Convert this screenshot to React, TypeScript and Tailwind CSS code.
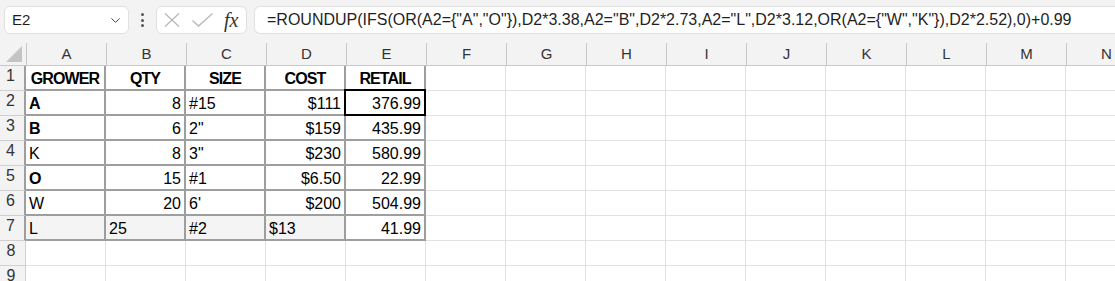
import React from "react";
import { ChevronDown } from "lucide-react";

type Cell = { v: string; align?: "l" | "r" | "c"; bold?: boolean };

const COLS = ["A", "B", "C", "D", "E", "F", "G", "H", "I", "J", "K", "L", "M", "N"];

const DATA: Cell[][] = [
  [
    { v: "GROWER", align: "c", bold: true },
    { v: "QTY", align: "c", bold: true },
    { v: "SIZE", align: "c", bold: true },
    { v: "COST", align: "c", bold: true },
    { v: "RETAIL", align: "c", bold: true },
  ],
  [
    { v: "A", bold: true },
    { v: "8", align: "r" },
    { v: "#15" },
    { v: "$111", align: "r" },
    { v: "376.99", align: "r" },
  ],
  [
    { v: "B", bold: true },
    { v: "6", align: "r" },
    { v: '2"' },
    { v: "$159", align: "r" },
    { v: "435.99", align: "r" },
  ],
  [
    { v: "K" },
    { v: "8", align: "r" },
    { v: '3"' },
    { v: "$230", align: "r" },
    { v: "580.99", align: "r" },
  ],
  [
    { v: "O", bold: true },
    { v: "15", align: "r" },
    { v: "#1" },
    { v: "$6.50", align: "r" },
    { v: "22.99", align: "r" },
  ],
  [
    { v: "W" },
    { v: "20", align: "r" },
    { v: "6'" },
    { v: "$200", align: "r" },
    { v: "504.99", align: "r" },
  ],
  [
    { v: "L" },
    { v: "25" },
    { v: "#2" },
    { v: "$13" },
    { v: "41.99", align: "r" },
  ],
];

const FORMULA =
  '=ROUNDUP(IFS(OR(A2={"A","O"}),D2*3.38,A2="B",D2*2.73,A2="L",D2*3.12,OR(A2={"W","K"}),D2*2.52),0)+0.99';

const FormulaBar = () => (
  <div className="flex h-[43px] items-start bg-[#f3f3f3] pt-[6px] pl-[4px]">
    <div className="flex h-[28px] w-[125px] items-center justify-between rounded-[6px] border border-[#e0e0e0] bg-white pl-[7px] pr-[5px] text-[15px] text-[#1f1f1f]">
      <span>E2</span>
      <ChevronDown size={15} strokeWidth={1.6} className="text-[#444]" />
    </div>
    <div className="flex h-[28px] w-[27px] flex-col items-center justify-center gap-[2.5px]">
      <span className="h-[3px] w-[3px] rounded-full bg-[#555]" />
      <span className="h-[3px] w-[3px] rounded-full bg-[#555]" />
      <span className="h-[3px] w-[3px] rounded-full bg-[#555]" />
    </div>
    <div className="flex h-[28px] w-[91px] items-center rounded-[6px] border border-[#e0e0e0] bg-white pl-[6px]">
      <svg width="16" height="14" viewBox="0 0 16 14" className="ml-[1px]">
        <path d="M1 0.5 L15 13.5 M15 0.5 L1 13.5" stroke="#b8b8b8" strokeWidth="1.3" fill="none" />
      </svg>
      <svg width="21" height="14" viewBox="0 0 21 14" className="ml-[12px]">
        <path d="M0.5 7.5 L6.5 13 L20.5 0.5" stroke="#b8b8b8" strokeWidth="1.3" fill="none" />
      </svg>
      <span className="ml-[11px] font-['Liberation_Serif',serif] text-[20px] italic leading-none text-[#333]">
        fx
      </span>
    </div>
    <div className="ml-[7px] flex h-[28px] flex-1 items-center rounded-l-[6px] border-y border-l border-[#e0e0e0] bg-white pl-[12px] text-[16px] whitespace-nowrap text-[#1f1f1f]">
      {FORMULA}
    </div>
  </div>
);

const App = () => {
  const rows = Array.from({ length: 9 }, (_, i) => i + 1);
  return (
    <div className="h-[281px] w-[1115px] overflow-hidden bg-white font-['Liberation_Sans',Arial,sans-serif]">
      <FormulaBar />
      <div className="grid grid-cols-[26px_repeat(14,80px)] grid-rows-[23px_repeat(9,25px)]">
        {/* corner */}
        <div className="relative border-b border-[#c8c8c8] bg-[#f3f3f3]">
          <svg width="17" height="17" viewBox="0 0 17 17" className="absolute right-[3px] bottom-[2px]">
            <polygon points="16,0 16,16 0,16" fill="#c4c4c4" />
          </svg>
        </div>
        {COLS.map((c) => (
          <div
            key={c}
            className="flex items-center justify-center border-b border-l border-[#c8c8c8] bg-[#f3f3f3] pt-[1px] text-[15px] text-[#333]"
          >
            {c}
          </div>
        ))}
        {rows.map((r) => (
          <React.Fragment key={r}>
            <div
              className={
                r <= 7
                  ? "flex items-end justify-center border-r-2 border-b border-[#9e9e9e] border-b-[#d0d0d0] bg-[#f3f3f3] pr-[3px] pb-[2px] text-[16px] text-[#333]"
                  : "flex items-end justify-center border-r border-b border-[#d0d0d0] bg-[#f3f3f3] pr-[3px] pb-[2px] text-[16px] text-[#333]"
              }
            >
              {r}
            </div>
            {COLS.map((_, ci) => {
              const inTable = r <= 7 && ci <= 4;
              const cell = inTable ? DATA[r - 1][ci] : undefined;
              const shaded = r === 7 && ci <= 3;
              const selected = r === 2 && ci === 4;
              const align =
                cell?.align === "r" ? "justify-end" : cell?.align === "c" ? "justify-center" : "justify-start";
              return (
                <div
                  key={ci}
                  className={
                    (inTable
                      ? "border-r-2 border-b-2 border-[#9e9e9e] "
                      : "border-r border-b border-[#e1e1e1] ") +
                    (shaded ? "bg-[#f4f4f4] " : "bg-white ") +
                    "relative flex items-end px-[3px] pb-[1px] text-[16px] leading-[18px] text-black " +
                    align
                  }
                >
                  {cell && (
                    <span className={cell.bold ? "font-bold tracking-[-0.9px]" : ""}>{cell.v}</span>
                  )}
                  {selected && (
                    <div className="absolute -top-[2px] -left-[2px] h-[27px] w-[82px] border-2 border-black" />
                  )}
                </div>
              );
            })}
          </React.Fragment>
        ))}
      </div>
    </div>
  );
};

export default App;
